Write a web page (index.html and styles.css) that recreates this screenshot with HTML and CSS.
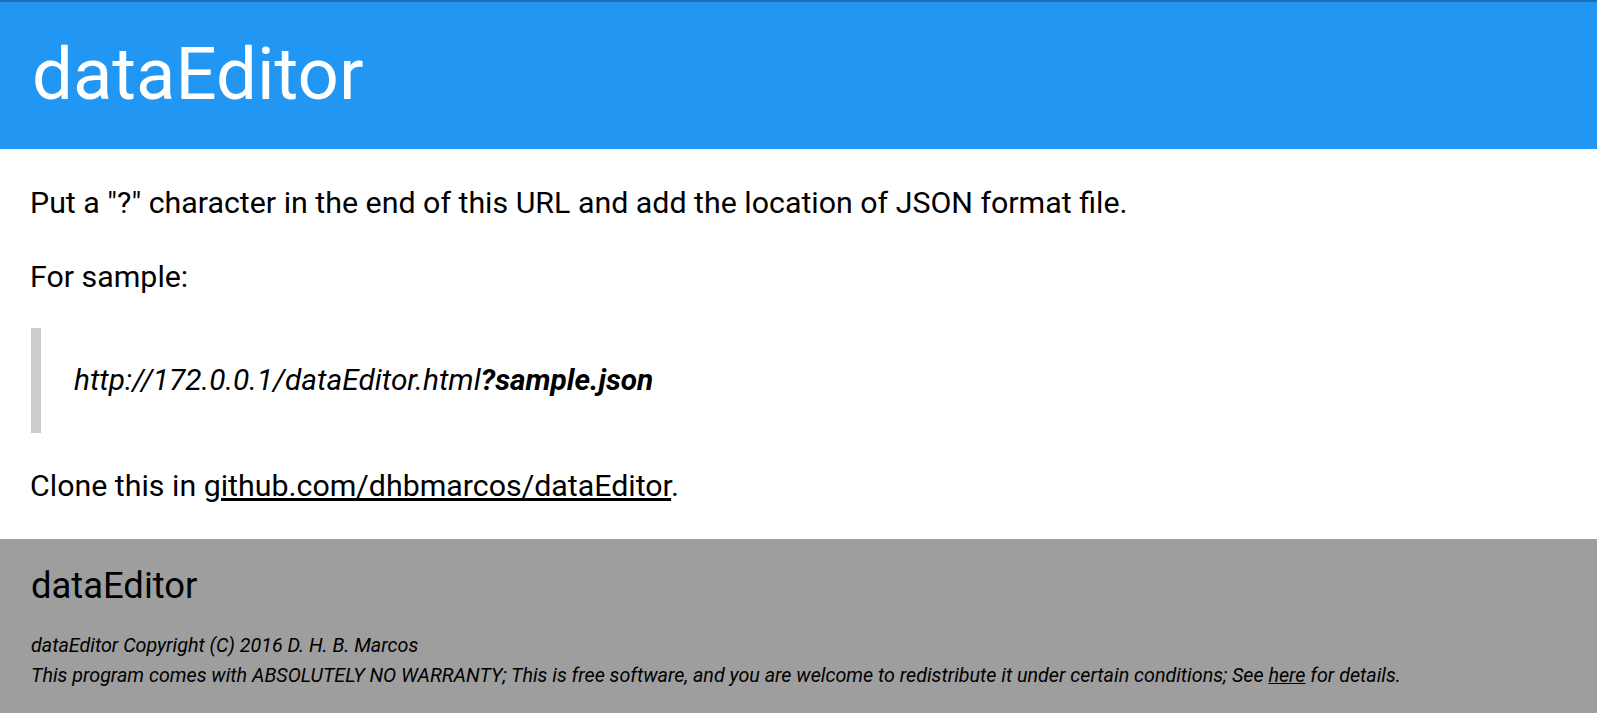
FILE: index.html
```html
<!DOCTYPE html>
<html lang="en">
<head>
<meta charset="utf-8">
<title>dataEditor</title>
<link rel="stylesheet" href="styles.css">
</head>
<body>
<header class="top-bar">
  <h1 class="top-title">dataEditor</h1>
</header>
<main class="content">
  <p class="text">Put a "?" character in the end of this URL and add the location of JSON format file.</p>
  <p class="text">For sample:</p>
  <blockquote class="sample">
    <em>http://172.0.0.1/dataEditor.html<strong>?sample.json</strong></em>
  </blockquote>
  <p class="text">Clone this in <a class="link" href="#">github.com/dhbmarcos/dataEditor</a>.</p>
</main>
<footer class="footer">
  <h2 class="footer-title">dataEditor</h2>
  <p class="legal">dataEditor Copyright (C) 2016 D. H. B. Marcos<br>This program comes with ABSOLUTELY NO WARRANTY; This is free software, and you are welcome to redistribute it under certain conditions; See <a class="link" href="#">here</a> for details.</p>
</footer>
</body>
</html>
```

FILE: styles.css
```css
html, body {
  margin: 0;
  padding: 0;
}
body {
  font-family: Roboto, "Liberation Sans", sans-serif;
  color: #000;
  background: #fff;
}
.top-bar {
  background: #2196f3;
  border-top: 2px solid #1f6fb0;
  padding: 0 32px;
  box-sizing: border-box;
  height: 149px;
}
.top-title {
  margin: 0;
  padding-top: 31px;
  font-size: 72.5px;
  font-weight: 400;
  line-height: 84px;
  color: #fff;
}
.content {
  display: flex;
  flex-direction: column;
  gap: 32px;
  padding: 33px 30px 32px;
}
.text {
  margin: 0;
  font-size: 30.35px;
  line-height: 42px;
}
.sample {
  margin: -2px 0 0 1px;
  border-left: 10px solid #ccc;
  padding: 31px 33px 32px;
  font-size: 29.8px;
  line-height: 42px;
}
.link {
  color: #000;
  text-decoration: underline;
}
.footer {
  background: #9e9e9e;
  padding: 25px 31px 30px;
}
.footer-title {
  margin: 0;
  font-size: 36.4px;
  font-weight: 400;
  line-height: 43px;
}
.legal {
  margin: 24px 0 0;
  font-size: 19.7px;
  line-height: 29.5px;
  font-style: italic;
}
```
